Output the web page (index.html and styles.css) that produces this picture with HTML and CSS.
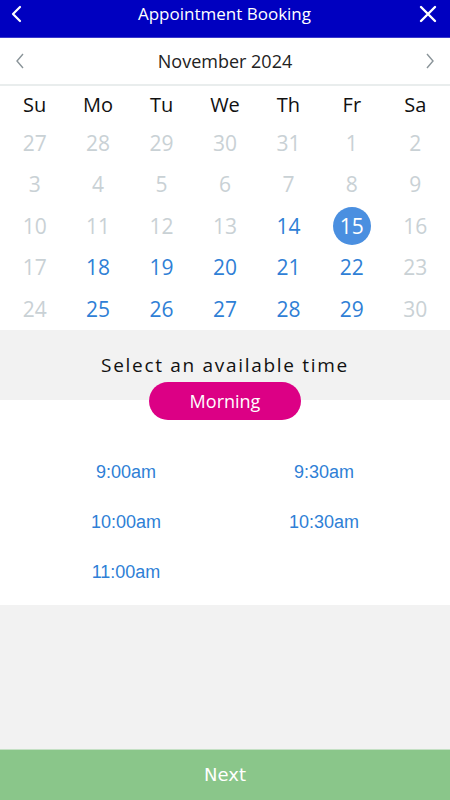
FILE: index.html
```html
<!DOCTYPE html>
<html lang="en">
<head>
    <meta charset="UTF-8">
    <meta name="viewport" content="width=device-width, initial-scale=1.0">
    <title>Appointment Booking</title>
    <link rel="stylesheet" href="styles.css">
</head>
<body>
    <div class="app">
        <header class="top-bar">
            <svg class="top-icon" width="14" height="20" viewBox="0 0 14 20">
                <path d="M10 3 L3 10 L10 17" fill="none" stroke="#fff" stroke-width="2.2" stroke-linecap="round" stroke-linejoin="round"/>
            </svg>
            <h1>Appointment Booking</h1>
            <svg class="top-icon" width="18" height="18" viewBox="0 0 18 18">
                <path d="M2 2 L16 16 M16 2 L2 16" fill="none" stroke="#fff" stroke-width="2.4" stroke-linecap="round"/>
            </svg>
        </header>

        <!-- Month picker -->
        <div class="month-bar">
            <svg width="12" height="18" viewBox="0 0 12 18">
                <path d="M9 2 L3 9 L9 16" fill="none" stroke="#8a9499" stroke-width="1.4"/>
            </svg>
            <span class="month-title">November 2024</span>
            <svg width="12" height="18" viewBox="0 0 12 18">
                <path d="M3 2 L9 9 L3 16" fill="none" stroke="#8a9499" stroke-width="1.4"/>
            </svg>
        </div>

        <div class="calendar">
            <div class="week-head">
                <span>Su</span><span>Mo</span><span>Tu</span><span>We</span><span>Th</span><span>Fr</span><span>Sa</span>
            </div>
            <div id="days" class="days">
                <!-- days are filled in by the script -->
            </div>
        </div>

        <!-- Time picker -->
        <div class="time-head">
            <p>Select an available time</p>
            <button class="period-btn">Morning</button>
        </div>
        <div class="slots">
            <span>9:00am</span>
            <span>9:30am</span>
            <span>10:00am</span>
            <span>10:30am</span>
            <span>11:00am</span>
        </div>

        <div class="spacer"></div>

        <button class="next-btn">Next</button>
    </div>

    <script>
        // Oct 27 - Nov 30, with the open days for this month
        const openDays = [14, 15, 18, 19, 20, 21, 22, 25, 26, 27, 28, 29];
        const selectedDay = 15;
        const days = document.getElementById('days');

        const cells = [27, 28, 29, 30, 31];
        for (let d = 1; d <= 30; d++) {
            cells.push(d);
        }

        cells.forEach((d, i) => {
            const inMonth = i >= 5;
            let cls = 'day';
            if (inMonth && openDays.includes(d)) cls += ' open';
            if (inMonth && d === selectedDay) cls += ' selected';
            days.innerHTML += `<span class="${cls}"><span class="num">${d}</span></span>`;
        });
    </script>
</body>
</html>
```

FILE: styles.css
```css
:root {
    --header-blue: #0000c0;
    --day-blue: #2f7fd6;
    --day-grey: #c9d1d5;
    --panel-grey: #f2f2f2;
    --magenta: #dc0085;
    --green: #8ac68a;
}

* {
    margin: 0;
    padding: 0;
    box-sizing: border-box;
}

body {
    font-family: 'Open Sans', 'Segoe UI', sans-serif;
    background-color: white;
}

.app {
    width: 450px;
    height: 800px;
    display: flex;
    flex-direction: column;
}

.top-bar {
    height: 38px;
    flex-shrink: 0;
    background-color: var(--header-blue);
    display: flex;
    align-items: center;
    justify-content: space-between;
    padding: 0 13px 0 10px;
    border-bottom: 1px solid #3a3acc;
}

.top-bar h1 {
    color: white;
    font-size: 17px;
    font-weight: normal;
    margin-top: -10px;
    margin-left: 6px;
}

.top-icon {
    margin-top: -10px;
}

.month-bar {
    height: 48px;
    flex-shrink: 0;
    display: flex;
    align-items: center;
    justify-content: space-between;
    padding: 0 14px;
    border-bottom: 2px solid #e9eded;
}

.month-title {
    font-size: 18px;
    color: #222;
}

.calendar {
    padding: 0 3px;
    flex-shrink: 0;
}

.week-head,
.days {
    display: grid;
    grid-template-columns: repeat(7, 1fr);
}

.week-head span {
    text-align: center;
    font-size: 20px;
    color: #111;
    height: 36px;
    line-height: 38px;
}

.day {
    height: 41.5px;
    display: flex;
    align-items: center;
    justify-content: center;
    font-size: 21px;
    color: var(--day-grey);
}

.day.open {
    color: var(--day-blue);
}

.day .num {
    width: 38px;
    height: 38px;
    border-radius: 50%;
    display: flex;
    align-items: center;
    justify-content: center;
}

.day.selected .num {
    background-color: #4a8fe0;
    color: white;
}

.time-head {
    background-color: var(--panel-grey);
    height: 70px;
    flex-shrink: 0;
    display: flex;
    flex-direction: column;
    align-items: center;
    padding-top: 22px;
    position: relative;
    z-index: 1;
}

.time-head p {
    font-size: 19px;
    letter-spacing: 1.7px;
    color: #111;
    line-height: 26px;
}

.period-btn {
    flex-shrink: 0;
    margin-top: 4px;
    width: 152px;
    height: 38px;
    border: none;
    border-radius: 19px;
    background-color: var(--magenta);
    color: white;
    font-family: 'Open Sans', sans-serif;
    font-size: 18px;
}

.slots {
    background-color: white;
    flex-shrink: 0;
    display: grid;
    grid-template-columns: 1fr 1fr;
    grid-template-rows: repeat(3, 50px);
    padding: 62px 27px 0;
    height: 205px;
}

.slots span {
    font-family: 'Liberation Sans', Arial, sans-serif;
    font-size: 18px;
    color: var(--day-blue);
    text-align: center;
}

.spacer {
    flex: 1;
    background-color: var(--panel-grey);
}

.next-btn {
    height: 51px;
    flex-shrink: 0;
    border: none;
    border-top: 1px solid #c4e0c4;
    background-color: var(--green);
    color: white;
    font-family: 'DejaVu Sans', sans-serif;
    font-size: 18px;
    padding-bottom: 2px;
}
```
